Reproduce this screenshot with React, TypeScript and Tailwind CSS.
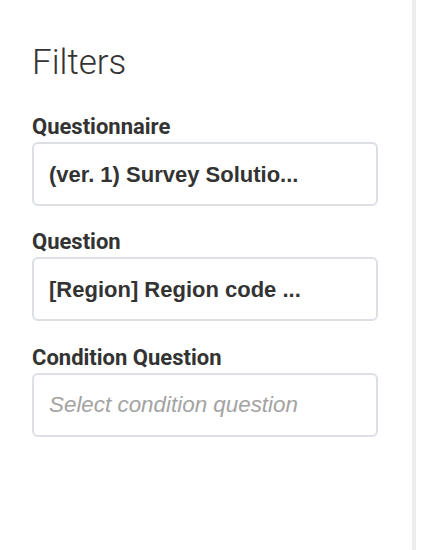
import React from 'react';

interface FilterFieldProps {
    label: string;
    value?: string;
    placeholder?: string;
    className?: string;
}

const FilterField: React.FC<FilterFieldProps> = ({ label, value, placeholder, className }) => {
    return (
        <div className={className}>
            <div className="text-[22px] leading-[24px] font-bold text-[#333333] mb-[3px] font-['Roboto',sans-serif]">
                {label}
            </div>
            <div className="h-[64px] flex items-center px-[15px] border-2 border-[#dcdfe3] rounded-[6px] bg-white font-['Liberation_Sans',Arial,sans-serif] text-[22px] whitespace-nowrap overflow-hidden">
                {value ? (
                    <span className="font-bold text-[#333333]">{value}</span>
                ) : (
                    <span className="italic text-[22.4px] text-[#a3a3a3]">{placeholder}</span>
                )}
            </div>
        </div>
    );
};

const App: React.FC = () => {
    return (
        <div className="w-[424px] h-[550px] bg-white flex overflow-hidden">
            {/* Filters panel */}
            <div className="w-[412px] pl-[32px] pr-[34px] pt-[43px]">
                <h1 className="text-[35px] leading-[40px] font-light text-[#333333] font-['Roboto',sans-serif]">
                    Filters
                </h1>
                <FilterField
                    className="mt-[32px]"
                    label="Questionnaire"
                    value="(ver. 1) Survey Solutio..."
                />
                <FilterField
                    className="mt-[24px]"
                    label="Question"
                    value="[Region] Region code ..."
                />
                <FilterField
                    className="mt-[25px]"
                    label="Condition Question"
                    placeholder="Select condition question"
                />
            </div>
            <div className="w-[4px] h-full bg-[#ececec]" />
            <div className="flex-1" />
        </div>
    );
};

export default App;
